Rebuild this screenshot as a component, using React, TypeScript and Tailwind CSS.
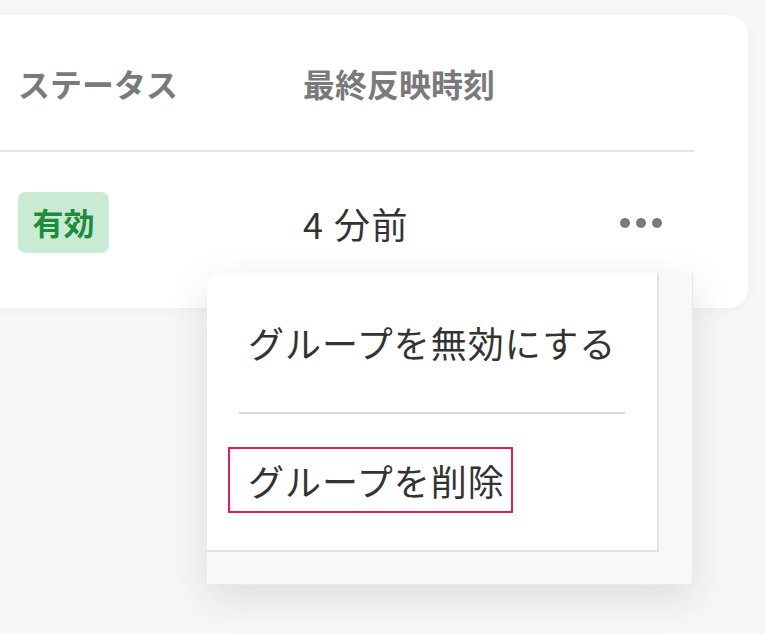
import React from "react";

const font = { fontFamily: '"Noto Sans CJK JP", "Noto Sans", sans-serif' };

function MoreDots() {
  return (
    <div className="flex items-center gap-[6px]">
      <span className="size-[10px] rounded-full bg-[#7a7a7a]" />
      <span className="size-[10px] rounded-full bg-[#7a7a7a]" />
      <span className="size-[10px] rounded-full bg-[#7a7a7a]" />
    </div>
  );
}

function GroupMenu() {
  return (
    <div className="absolute left-[207px] top-[273px] h-[312px] w-[486px] rounded-tl-[14px] border-r border-b border-[#e9e9ea] bg-[#f8f8f8] shadow-[0_12px_40px_rgba(40,40,60,0.13)]">
      <div className="h-[279px] w-[452px] rounded-tl-[14px] border-r-2 border-b-2 border-[#e3e3e3] bg-white">
        <div className="pl-[41px] pt-[42px] text-[36px] leading-[54px] tracking-[1px] text-[#333]">グループを無効にする</div>
        <div className="mx-[32px] mt-[43px] h-[2px] bg-[#dadada]" />
        <div className="mt-[33px] ml-[21px] flex h-[66px] w-[285px] items-center border-2 border-[#e8195c] pl-[18px] text-[36px] leading-[54px] tracking-[1px] text-[#333]">
          グループを削除
        </div>
      </div>
    </div>
  );
}

export default function App() {
  return (
    <div className="relative h-[634px] w-[765px] overflow-hidden bg-[#f7f7f8] pt-[15px]" style={font}>
      <section className="ml-[-24px] h-[293px] w-[772px] rounded-[20px] bg-white pr-[53px] shadow-[0_2px_14px_rgba(0,0,0,0.04)]">
        <div className="flex h-[137px] items-center border-b-2 border-[#e5e5e5] pl-[42px] text-[32px] font-bold text-[#7a7a7a]">
          <div className="w-[285px]">ステータス</div>
          <div>最終反映時刻</div>
        </div>
        <div className="flex items-center pl-[42px] pt-[40px]">
          <div className="w-[285px]">
            <span className="inline-flex h-[61px] w-[91px] items-center justify-center rounded-[8px] bg-[#c9ebd4] text-[31px] font-bold text-[#1f8b3d]">
              有効
            </span>
          </div>
          <div className="w-[317px] text-[36px] tracking-[1.5px] text-[#333]">4 分前</div>
          <MoreDots />
        </div>
      </section>
      <GroupMenu />
    </div>
  );
}
